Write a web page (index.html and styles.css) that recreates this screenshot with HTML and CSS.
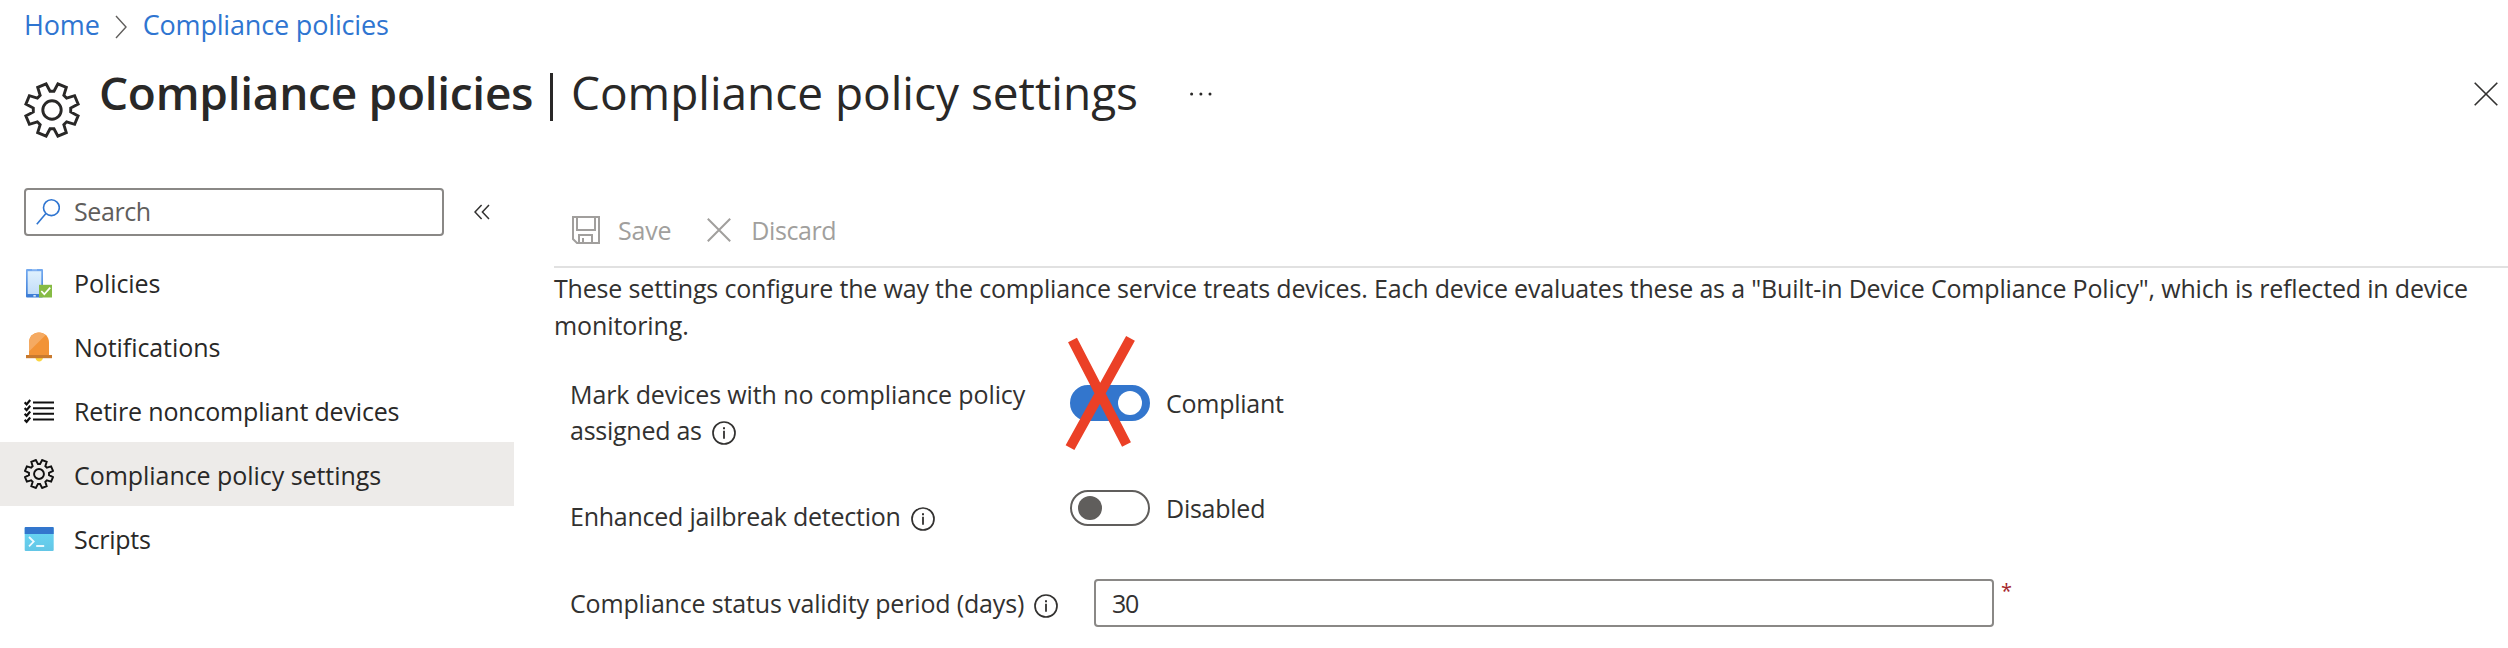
FILE: index.html
```
<!DOCTYPE html>
<html lang="en">
<head>
<meta charset="utf-8">
<title>Compliance policies | Compliance policy settings</title>
<link rel="stylesheet" href="styles.css">
</head>
<body>
<svg class="defs" aria-hidden="true">
  <symbol id="gear" viewBox="-28 -28 56 56">
    <path d="M-1.97-18.7H1.97L5.89-26.1 14.32-22.65 11.83-14.61 14.61-11.83 22.62-14.3 26.15-5.89 18.7-1.97V1.97L26.1 5.89 22.65 14.32 14.61 11.83 11.83 14.61 14.3 22.62 5.89 26.15 1.97 18.7H-1.97L-5.89 26.1-14.32 22.65-11.83 14.61-14.61 11.83-22.62 14.3-26.15 5.89-18.7 1.97V-1.97L-26.1-5.89-22.65-14.32-14.61-11.83-11.83-14.61-14.3-22.62-5.89-26.15Z"/>
    <circle r="9.2"/>
  </symbol>
  <symbol id="info" viewBox="0 0 24 24">
    <circle cx="12" cy="12" r="11" fill="none" stroke="#323130" stroke-width="1.7"/>
    <path d="M11.1 9.8h1.8v8h-1.8zM11 6.2h2v2h-2z" fill="#323130"/>
  </symbol>
</svg>

<nav class="breadcrumb">
  <a class="crumb">Home</a>
  <svg class="crumb-sep" viewBox="0 0 12 24"><path d="M1 1l10 11L1 23"/></svg>
  <a class="crumb">Compliance policies</a>
</nav>

<header class="page-header">
  <svg class="header-gear"><use href="#gear"/></svg>
  <h1 class="title"><span class="title-strong">Compliance policies</span><span class="title-bar"></span><span class="title-sub">Compliance policy settings</span></h1>
  <svg class="more" viewBox="0 0 24 6"><circle cx="2.6" cy="3" r="1.5"/><circle cx="11.9" cy="3" r="1.5"/><circle cx="21" cy="3" r="1.5"/></svg>
  <svg class="close" viewBox="0 0 24 24"><path d="M.7.7l22.6 22.6M23.3.7L.7 23.3"/></svg>
</header>

<div class="layout">
  <aside class="sidebar">
    <div class="search-row">
      <div class="search">
        <svg class="search-icon" viewBox="0 0 24 26"><circle cx="15.4" cy="8.7" r="7.9"/><path d="M9.9 14.6L.8 25.2"/></svg>
        <span class="search-text">Search</span>
      </div>
      <svg class="collapse" viewBox="0 0 16 16"><path d="M7.6 1L1 8l6.600 7M15 1L8.400 8l6.600 7"/></svg>
    </div>
    <ul class="menu">
      <li class="item">
        <svg class="item-icon" viewBox="0 0 30 30">
          <defs>
            <linearGradient id="phone" x1="0" y1="0" x2="0" y2="1"><stop offset="0" stop-color="#74aaf0"/><stop offset="1" stop-color="#3a7bd5"/></linearGradient>
            <linearGradient id="screen" x1="0" y1="0" x2="0" y2="1"><stop offset="0" stop-color="#dff1fd"/><stop offset="1" stop-color="#c3ddf8"/></linearGradient>
          </defs>
          <rect x="2" y="1" width="17" height="28.500" rx="1" fill="url(#phone)"/>
          <rect x="3.700" y="3.200" width="13.600" height="22.800" fill="url(#screen)"/>
          <rect x="8" y="1.300" width="5" height="1" fill="#a9cbf5"/>
          <rect x="9.400" y="27" width="2.400" height="1.600" fill="#d6e8fb"/>
          <rect x="15" y="16.800" width="13" height="12.700" fill="#86bb44"/>
          <path d="M17.300 23l3 3.200 5.900-6.600" fill="none" stroke="#fff" stroke-width="1.700"/>
        </svg>
        <span class="item-text">Policies</span>
      </li>
      <li class="item">
        <svg class="item-icon" viewBox="0 0 30 30">
          <path d="M11.500 26h7.400c-.3 2.200-1.800 3.600-3.700 3.600s-3.400-1.400-3.700-3.600z" fill="#fbd53f"/>
          <path d="M5 23.500V10.600C5 4.800 9.300.5 15 .5s10 4.300 10 10.100v12.900z" fill="#f29336"/>
          <path d="M5 19.500V10.600C5 4.800 9.300.5 15 .5c2.500 0 4.900.9 6.700 2.500z" fill="#f5aa62"/>
          <rect x="2" y="23" width="26" height="3.200" fill="#c97a2e"/>
        </svg>
        <span class="item-text">Notifications</span>
      </li>
      <li class="item">
        <svg class="item-icon list-icon" viewBox="0 0 30 30">
          <path class="lines" d="M9 6.500h21M9 12.200h21M9 17.800h21M9 23.500h21"/>
          <path class="ticks" d="M.6 6.400l2 2L6.200 4M.6 12.100l2 2 3.600-4.300M.6 17.800l2 2 3.600-4.300M.6 23.800l2 2 3.600-4.300"/>
        </svg>
        <span class="item-text wide">Retire noncompliant devices</span>
      </li>
      <li class="item selected">
        <svg class="item-icon small-gear"><use href="#gear"/></svg>
        <span class="item-text settings">Compliance policy settings</span>
      </li>
      <li class="item">
        <svg class="item-icon" viewBox="0 0 30 30">
          <defs><linearGradient id="term" x1="0" y1="0" x2="0" y2="1"><stop offset="0" stop-color="#69d8f5"/><stop offset="1" stop-color="#63c6e6"/></linearGradient></defs>
          <rect x=".7" y="3" width="29" height="24" rx="1" fill="url(#term)"/>
          <path d="M.7 4a1 1 0 011-1h27a1 1 0 011 1v6H.7z" fill="#3376cd"/>
          <path d="M5 13l4.700 4.600L5 22.300" fill="none" stroke="#eefaff" stroke-width="1.800"/>
          <path d="M12.200 22h8" stroke="#eefaff" stroke-width="1.900"/>
        </svg>
        <span class="item-text scripts">Scripts</span>
      </li>
    </ul>
  </aside>

  <main class="main">
    <div class="toolbar">
      <div class="command">
        <svg class="save-icon" viewBox="0 0 28 28"><path d="M1 1h26v26H5l-4-4zM5 1v13h18V1M7 27v-8h13v8M11 22v5"/></svg>
        <span class="save-text">Save</span>
      </div>
      <div class="command">
        <svg class="discard-icon" viewBox="0 0 24 24"><path d="M.8.8l22.400 22.400M23.200.8L.8 23.200"/></svg>
        <span class="discard-text">Discard</span>
      </div>
    </div>
    <p class="intro">These settings configure the way the compliance service treats devices. Each device evaluates these as a "Built-in Device Compliance Policy", which is reflected in device <span class="intro-end">monitoring.</span></p>

    <div class="settings-form">
      <div class="field mark">
        <div class="label">Mark devices with no compliance policy<br><span class="label-end">assigned as</span><svg class="info"><use href="#info"/></svg></div>
        <div class="control">
          <div class="toggle on"><span class="knob"></span>
            <svg class="cross" viewBox="0 0 76 120"><path d="M10.500 8l54 104.500M68.500 6.300L8 115.700"/></svg>
          </div>
          <span class="state compliant">Compliant</span>
        </div>
      </div>
      <div class="field jailbreak">
        <div class="label">Enhanced jailbreak detection<svg class="info"><use href="#info"/></svg></div>
        <div class="control">
          <div class="toggle"><span class="knob"></span></div>
          <span class="state">Disabled</span>
        </div>
      </div>
      <div class="field validity">
        <div class="label">Compliance status validity period (days)<svg class="info"><use href="#info"/></svg></div>
        <div class="days">30</div>
        <span class="required">*</span>
      </div>
    </div>
  </main>
</div>
</body>
</html>
```
FILE: styles.css
```
* { box-sizing: border-box; }

body {
  margin: 0;
  height: 648px;
  overflow: hidden;
  background: #fff;
  color: #323130;
  font: 25px "Open Sans", "Noto Sans", sans-serif;
  letter-spacing: -0.12px;
}

svg { display: block; flex: none; }
.defs { position: absolute; width: 0; height: 0; }

.breadcrumb {
  display: flex;
  align-items: center;
  height: 52px;
  padding: 0 0 2px 24px;
  font-size: 27px;
  line-height: 50px;
  letter-spacing: -0.17px;
  color: #2f75d1;
}
.crumb-sep { width: 12px; height: 24px; margin: 4px 16px 0 15px; fill: none; stroke: #605e5c; stroke-width: 1.4; }

.page-header {
  display: flex;
  align-items: flex-start;
  height: 116px;
  padding: 0 10px 0 24px;
}
.header-gear { width: 56px; height: 56px; margin-top: 30px; fill: none; stroke: #292827; stroke-width: 2.9; }
.title {
  display: flex;
  margin: 0 0 0 19px;
  font-size: 46px;
  font-weight: 400;
  line-height: 80px;
  letter-spacing: 0;
  color: #292827;
}
.title-strong { width: 451px; font-weight: 600; letter-spacing: -0.28px; }
.title-bar { width: 3px; height: 48px; margin: 21px 18px 0 0; background: #292827; }
.title-sub { letter-spacing: -0.02px; }
.more { width: 24px; height: 6px; margin: 39px 0 0 51px; fill: #292827; }
.close { width: 24px; height: 24px; margin: 30px 0 0 auto; stroke: #323130; stroke-width: 1.6; }

.layout { display: flex; }

.sidebar { width: 514px; padding-top: 20px; }
.search-row { display: flex; align-items: center; padding-left: 24px; }
.search {
  display: flex;
  align-items: center;
  width: 420px;
  height: 48px;
  padding-left: 10px;
  border: 2px solid #8a8886;
  border-radius: 4px;
}
.search-icon { width: 24px; height: 26px; fill: none; stroke: #2f75d1; stroke-width: 1.6; }
.search-text { margin: -2px 0 0 14px; letter-spacing: -0.42px; color: #605e5c; }
.collapse { width: 16px; height: 16px; margin-left: 30px; fill: none; stroke: #323130; stroke-width: 1.5; }

.menu { margin: 14px 0 0; padding: 0; list-style: none; }
.item { display: flex; align-items: center; gap: 20px; height: 64px; padding: 2px 0 0 24px; color: #292827; }
.item-icon { width: 30px; height: 30px; }
.item-text { letter-spacing: -0.07px; }
.item-text.wide { letter-spacing: -0.17px; }
.item-text.settings { letter-spacing: -0.05px; }
.item-text.scripts { letter-spacing: -0.24px; }
.selected { background: #edebe9; }
.small-gear { margin-top: -2px; fill: none; stroke: #111; stroke-width: 3.6; }
.lines { fill: none; stroke: #111; stroke-width: 2; }
.ticks { fill: none; stroke: #111; stroke-width: 2.2; }

.main { flex: 1; margin-left: 40px; }
.toolbar {
  display: flex;
  align-items: center;
  gap: 36px;
  height: 100px;
  padding: 26px 0 0 18px;
  border-bottom: 2px solid #e1e1e1;
  color: #a19f9d;
}
.command { display: flex; align-items: center; }
.save-icon { width: 28px; height: 28px; margin-right: 18px; fill: none; stroke: #a19f9d; stroke-width: 2; }
.save-text { letter-spacing: -0.2px; }
.discard-icon { width: 24px; height: 24px; margin-right: 20px; stroke: #a19f9d; stroke-width: 2; }
.discard-text { letter-spacing: -0.41px; }

.intro { width: 1930px; margin: 0; padding-top: 2px; line-height: 37px; letter-spacing: -0.172px; }
.intro-end { letter-spacing: -0.1px; }

.settings-form { padding: 32px 0 0 15px; }
.field { display: flex; align-items: flex-start; }
.label { width: 501px; padding: 1px 0 0 1px; line-height: 35.5px; letter-spacing: -0.11px; white-space: nowrap; }
.label-end { letter-spacing: -0.26px; }
.info { display: inline-block; width: 24px; height: 24px; margin-left: 10px; vertical-align: -5px; }
.mark { height: 114px; }
.mark .control { margin-top: 9px; }
.control { display: flex; align-items: center; height: 36px; }
.state { margin-left: 16px; letter-spacing: -0.25px; }
.toggle {
  position: relative;
  display: flex;
  align-items: center;
  width: 80px;
  height: 36px;
  padding: 0 6px;
  border: 2px solid #605e5c;
  border-radius: 18px;
}
.toggle .knob { width: 24px; height: 24px; border-radius: 50%; background: #605e5c; }
.toggle.on { justify-content: flex-end; border-color: #3376cd; background: #3376cd; }
.toggle.on .knob { background: #fff; }
.cross { position: absolute; left: -10px; top: -55px; width: 76px; height: 120px; fill: none; stroke: #eb4026; stroke-width: 10; }

.jailbreak { height: 89px; }
.jailbreak .label { padding-top: 9px; letter-spacing: -0.24px; }
.validity .label { width: 525px; padding-top: 7px; letter-spacing: -0.16px; }
.days {
  width: 900px;
  height: 48px;
  padding-left: 16px;
  border: 2px solid #8a8886;
  border-radius: 4px;
  line-height: 45px;
  letter-spacing: -1.2px;
}
.required { margin: -4px 0 0 7px; font-size: 20px; line-height: 32px; color: #a4262c; }
```
